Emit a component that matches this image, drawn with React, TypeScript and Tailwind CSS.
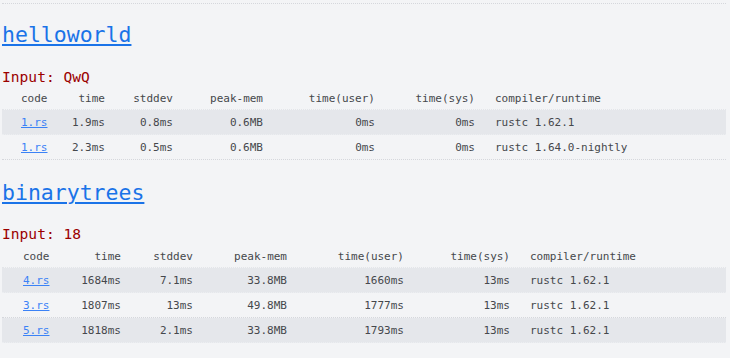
import React from 'react';

type Row = {
  code: string;
  time: string;
  stddev: string;
  mem: string;
  user: string;
  sys: string;
  compiler: string;
};

const benches = [
  {
    name: 'helloworld',
    input: 'QwQ',
    pad: 'mt-[15px]',
    inputGap: 'mt-[16px]',
    tableGap: 'mt-0',
    cols: 'grid-cols-[60px_43px_68px_90px_112px_100px_1fr]',
    first: 'pl-[19px]',
    rows: [
      { code: '1.rs', time: '1.9ms', stddev: '0.8ms', mem: '0.6MB', user: '0ms', sys: '0ms', compiler: 'rustc 1.62.1' },
      { code: '1.rs', time: '2.3ms', stddev: '0.5ms', mem: '0.6MB', user: '0ms', sys: '0ms', compiler: 'rustc 1.64.0-nightly' },
    ] as Row[],
  },
  {
    name: 'binarytrees',
    input: '18',
    pad: 'mt-[17px]',
    inputGap: 'mt-[15px]',
    tableGap: 'mt-[1px]',
    cols: 'grid-cols-[70px_49px_72px_94px_117px_106px_1fr]',
    first: 'pl-[21px]',
    rows: [
      { code: '4.rs', time: '1684ms', stddev: '7.1ms', mem: '33.8MB', user: '1660ms', sys: '13ms', compiler: 'rustc 1.62.1' },
      { code: '3.rs', time: '1807ms', stddev: '13ms', mem: '49.8MB', user: '1777ms', sys: '13ms', compiler: 'rustc 1.62.1' },
      { code: '5.rs', time: '1818ms', stddev: '2.1ms', mem: '33.8MB', user: '1793ms', sys: '13ms', compiler: 'rustc 1.62.1' },
    ] as Row[],
  },
];

export default function App() {
  return (
    <div className="min-h-screen w-full bg-[#f3f4f6] pl-[2px] pr-[4px] font-['DejaVu_Sans_Mono',monospace] text-[#3c4043]">
      {/* tail of the table above */}
      <div className="h-[4px] border-b border-dotted border-[#d5d7dc]" />

      {benches.map((b) => (
        <section key={b.name}>
          <h2 className={`${b.pad} text-[21.5px] leading-[32px]`}>
            <a href="#" className="text-[#1a73e8] underline underline-offset-[2px]">
              {b.name}
            </a>
          </h2>
          <div className={`${b.inputGap} text-[14.6px] leading-[20px] text-[#9b0000]`}>
            Input: {b.input}
          </div>

          <div className={`${b.tableGap} text-[11px] text-[#45484c]`}>
            <div className={`grid ${b.cols} h-[23px] items-center pt-[3px] border-b border-dotted border-[#e3e5e9]`}>
              <span className={b.first}>code</span>
              <span className="text-right">time</span>
              <span className="text-right">stddev</span>
              <span className="text-right">peak-mem</span>
              <span className="text-right">time(user)</span>
              <span className="text-right">time(sys)</span>
              <span className="pl-[20px]">compiler/runtime</span>
            </div>
            {b.rows.map((r, i) => (
              <div
                key={i}
                className={`grid ${b.cols} h-[25px] items-center pt-[3px] border-b border-dotted ${
                  i % 2 === 0 ? 'bg-[#e5e7eb] border-[#eceef1]' : 'border-[#d5d7dc]'
                }`}
              >
                <span className={b.first}>
                  <a href="#" className="text-[#3b82f6] underline">
                    {r.code}
                  </a>
                </span>
                <span className="text-right">{r.time}</span>
                <span className="text-right">{r.stddev}</span>
                <span className="text-right">{r.mem}</span>
                <span className="text-right">{r.user}</span>
                <span className="text-right">{r.sys}</span>
                <span className="pl-[20px]">{r.compiler}</span>
              </div>
            ))}
          </div>
        </section>
      ))}
    </div>
  );
}
